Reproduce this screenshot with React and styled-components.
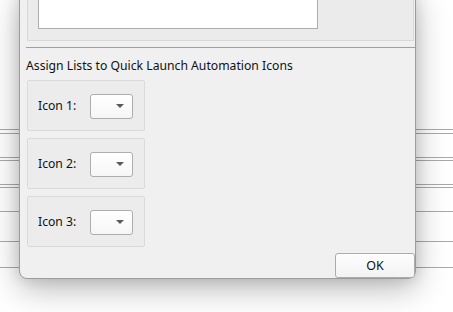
import React from "react";
import styled, { createGlobalStyle } from "styled-components";

const Global = createGlobalStyle`
  html, body { margin: 0; padding: 0; background: #ffffff; overflow: hidden; }
  body { font-family: "Noto Sans", "Open Sans", sans-serif; }
  #root { width: 453px; height: 312px; position: relative; overflow: hidden; }
`;

const Backdrop = styled.div`
  display: flex;
  flex-direction: column;
  width: 453px;
  height: 312px;
  background: #ffffff;
`;

const BackRow = styled.div`
  height: ${(p) => p.$h}px;
  flex: none;
  box-sizing: border-box;
  border-top: ${(p) => (p.$line ? "1px solid #a9a9a9" : "none")};
`;

const Dialog = styled.div`
  position: absolute;
  left: 19px;
  top: -10px;
  width: 397px;
  box-sizing: border-box;
  display: flex;
  flex-direction: column;
  background: #f0f0f0;
  border: 1px solid #9c9c9c;
  border-radius: 0 0 8px 8px;
  box-shadow: 0 10px 32px rgba(0, 0, 0, 0.28), 0 0 14px rgba(0, 0, 0, 0.12);
  color: #111;
  font-size: 12.2px;
`;

const TopPanel = styled.div`
  box-sizing: border-box;
  height: 50px;
  margin: 0 1px 0 7px;
  padding: 0 10px 11px 10px;
  background: #ebebeb;
  border: 1px solid #d9d9d9;
  border-top: none;
  display: flex;
  align-items: flex-end;
`;

const TextArea = styled.div`
  width: 280px;
  height: 100%;
  box-sizing: border-box;
  background: #ffffff;
  border: 1px solid #adadad;
  border-top: none;
`;

const Separator = styled.div`
  height: 1px;
  margin: 6px 0 0 6px;
  background: #a0a0a0;
`;

const Heading = styled.div`
  padding: 10px 0 6px 6px;
  line-height: 16px;
  height: 16px;
  white-space: nowrap;
`;

const Groups = styled.div`
  display: flex;
  flex-direction: column;
  gap: 7px;
  margin-left: 7px;
`;

const GroupBox = styled.div`
  box-sizing: border-box;
  width: 118px;
  height: 51px;
  display: flex;
  align-items: center;
  padding: 1px 0 0 10px;
  background: #ececec;
  border: 1px solid #dadada;
  border-radius: 2px;
`;

const Label = styled.span`
  width: 52px;
  line-height: 16px;
`;

const Combo = styled.div`
  box-sizing: border-box;
  width: 43px;
  height: 25px;
  display: flex;
  align-items: center;
  justify-content: flex-end;
  padding-right: 8px;
  background: linear-gradient(#ffffff, #f6f6f6);
  border: 1px solid #adadad;
  border-radius: 3px;
`;

const Arrow = styled.span`
  width: 0;
  height: 0;
  border-left: 4px solid transparent;
  border-right: 4px solid transparent;
  border-top: 4px solid #5a5a5a;
  margin-top: -1px;
`;

const Footer = styled.div`
  display: flex;
  justify-content: flex-end;
  padding-top: 6px;
`;

const Button = styled.button`
  box-sizing: border-box;
  width: 80px;
  height: 25px;
  margin: 0;
  font-family: inherit;
  font-size: 12.5px;
  color: #111;
  background: linear-gradient(#fdfdfd, #f3f3f3);
  border: 1px solid #acacac;
  border-radius: 3px;
  padding: 0;
`;

const rows = [
  { h: 129 },
  { h: 4, line: true },
  { h: 24, line: true },
  { h: 3, line: true },
  { h: 24, line: true },
  { h: 3, line: true },
  { h: 24, line: true },
  { h: 30, line: true },
  { h: 26, line: true },
  { h: 45, line: true },
];

export default function App() {
  return (
    <>
      <Global />
      <Backdrop>
        {rows.map((r, i) => (
          <BackRow key={i} $h={r.h} $line={r.line} />
        ))}
      </Backdrop>
      <Dialog>
        <TopPanel>
          <TextArea />
        </TopPanel>
        <Separator />
        <Heading>Assign Lists to Quick Launch Automation Icons</Heading>
        <Groups>
          {[1, 2, 3].map((n) => (
            <GroupBox key={n}>
              <Label>Icon {n}:</Label>
              <Combo>
                <Arrow />
              </Combo>
            </GroupBox>
          ))}
        </Groups>
        <Footer>
          <Button>OK</Button>
        </Footer>
      </Dialog>
    </>
  );
}
